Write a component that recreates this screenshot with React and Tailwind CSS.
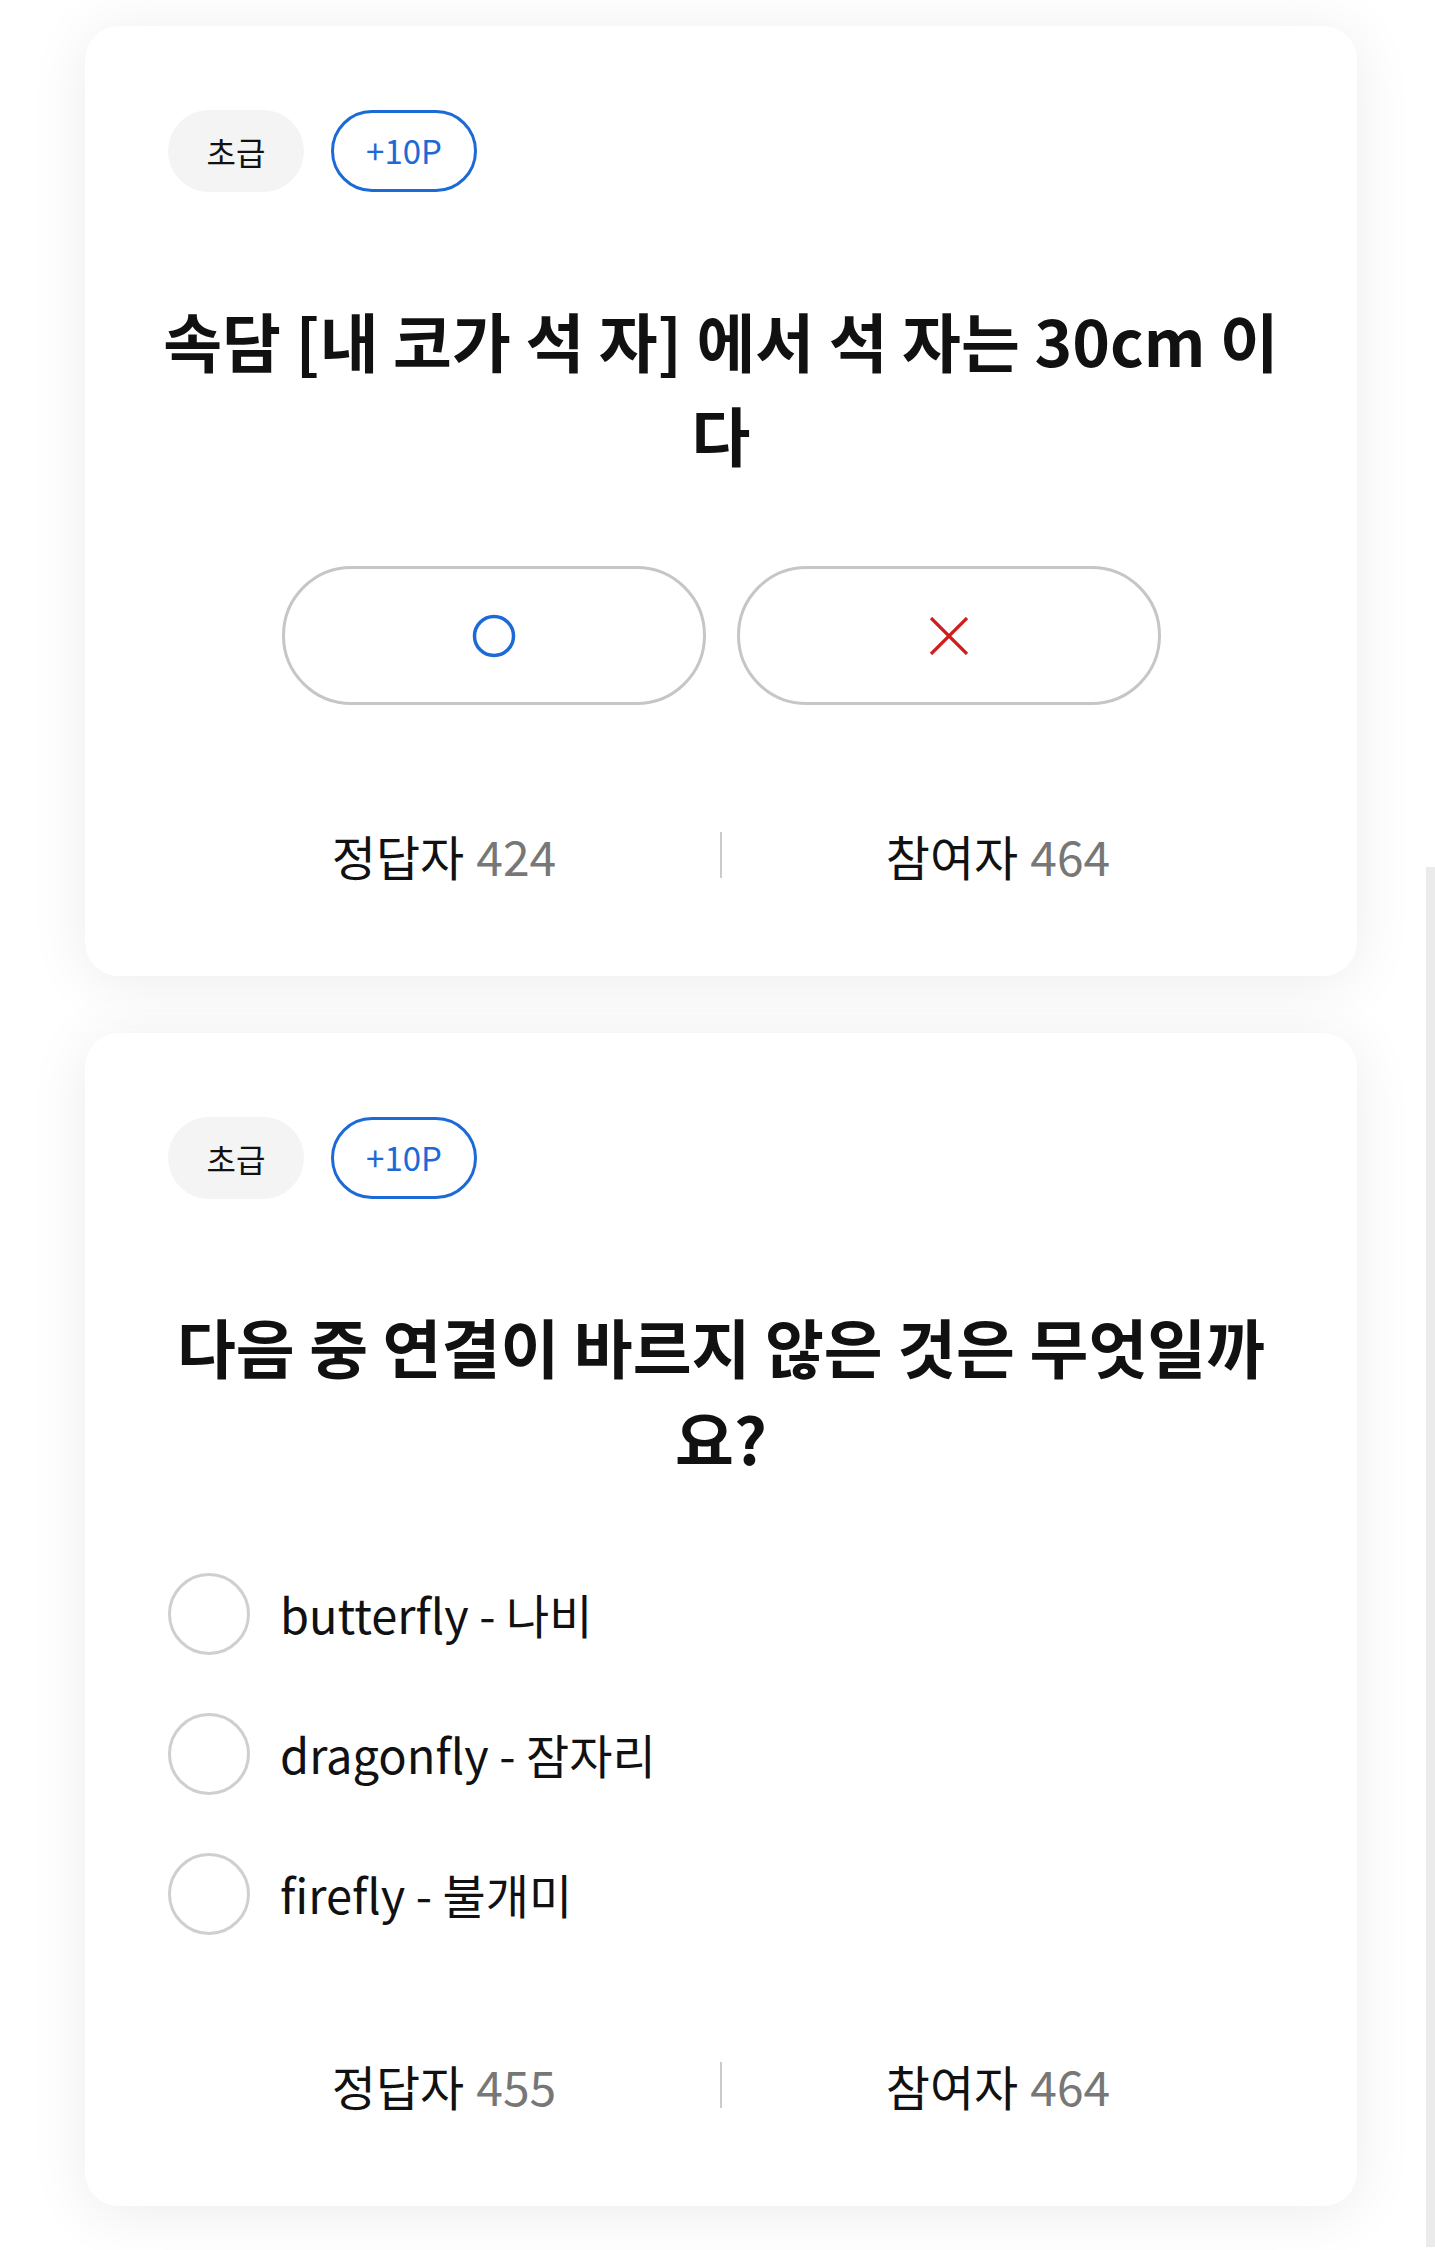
import React from "react";

function Badges() {
  return (
    <div className="flex items-center gap-[27px]">
      <span className="flex h-[82px] w-[136px] items-center justify-center rounded-full bg-[#f4f4f4] text-[32px] text-[#111]">
        초급
      </span>
      <span className="flex h-[82px] w-[146px] items-center justify-center rounded-full border-[3px] border-[#1b6ad6] text-[33px] text-[#1b6ad6]">
        +10P
      </span>
    </div>
  );
}

function Stats({ correct, total }) {
  return (
    <div className="mt-[120px] flex h-[60px] items-center">
      <div className="flex flex-1 justify-center text-[48px]">
        <span className="text-[#111]">정답자</span>
        <span className="ml-[12px] text-[#777]">{correct}</span>
      </div>
      <div className="h-[46px] w-[2px] bg-[#cbcbcb]" />
      <div className="flex flex-1 justify-center text-[48px]">
        <span className="text-[#111]">참여자</span>
        <span className="ml-[12px] text-[#777]">{total}</span>
      </div>
    </div>
  );
}

function Card({ children }) {
  return (
    <div className="rounded-[34px] bg-white px-[83px] pb-[91px] pt-[84px] shadow-[0_6px_60px_rgba(0,0,0,0.08)]">
      {children}
    </div>
  );
}

const options = ["butterfly - 나비", "dragonfly - 잠자리", "firefly - 불개미"];

export default function App() {
  return (
    <div className="relative min-h-[2250px] bg-white pb-[40px] pt-[26px] font-['Noto_Sans_CJK_KR','Noto_Sans',sans-serif]">
      <div className="ml-[85px] flex w-[1272px] flex-col gap-[57px]">
        <Card>
          <Badges />
          <h2 className="-mx-[14px] mt-[100px] text-center text-[64px] font-bold leading-[94px] text-[#111]">
            속담 [내 코가 석 자] 에서 석 자는 30cm 이다
          </h2>
          <div className="mt-[86px] flex justify-center gap-[31px]">
            <button className="flex h-[139px] w-[424px] items-center justify-center rounded-full border-[3px] border-[#c6c6c6] bg-white">
              <svg width="44" height="44" viewBox="0 0 44 44">
                <circle cx="22" cy="22" r="19.5" fill="none" stroke="#1b6ad6" strokeWidth="3.5" />
              </svg>
            </button>
            <button className="flex h-[139px] w-[424px] items-center justify-center rounded-full border-[3px] border-[#c6c6c6] bg-white">
              <svg width="40" height="38" viewBox="0 0 40 38">
                <path d="M2 1 L38 37 M38 1 L2 37" stroke="#d01c1c" strokeWidth="3.2" fill="none" />
              </svg>
            </button>
          </div>
          <Stats correct={424} total={464} />
        </Card>

        <Card>
          <Badges />
          <h2 className="-mx-[14px] mt-[100px] text-center text-[64px] font-bold leading-[92px] text-[#111]">
            다음 중 연결이 바르지 않은 것은 무엇일까요?
          </h2>
          <div className="mt-[90px] flex flex-col gap-[58px]">
            {options.map((o) => (
              <label key={o} className="flex items-center gap-[30px]">
                <span className="h-[82px] w-[82px] shrink-0 rounded-full border-[3px] border-[#cfcfcf]" />
                <span className="text-[47px] text-[#111]">{o}</span>
              </label>
            ))}
          </div>
          <Stats correct={455} total={464} />
        </Card>
      </div>
      <div className="absolute bottom-[3px] right-0 top-[867px] w-[9px] bg-[#ebebeb]" />
    </div>
  );
}
